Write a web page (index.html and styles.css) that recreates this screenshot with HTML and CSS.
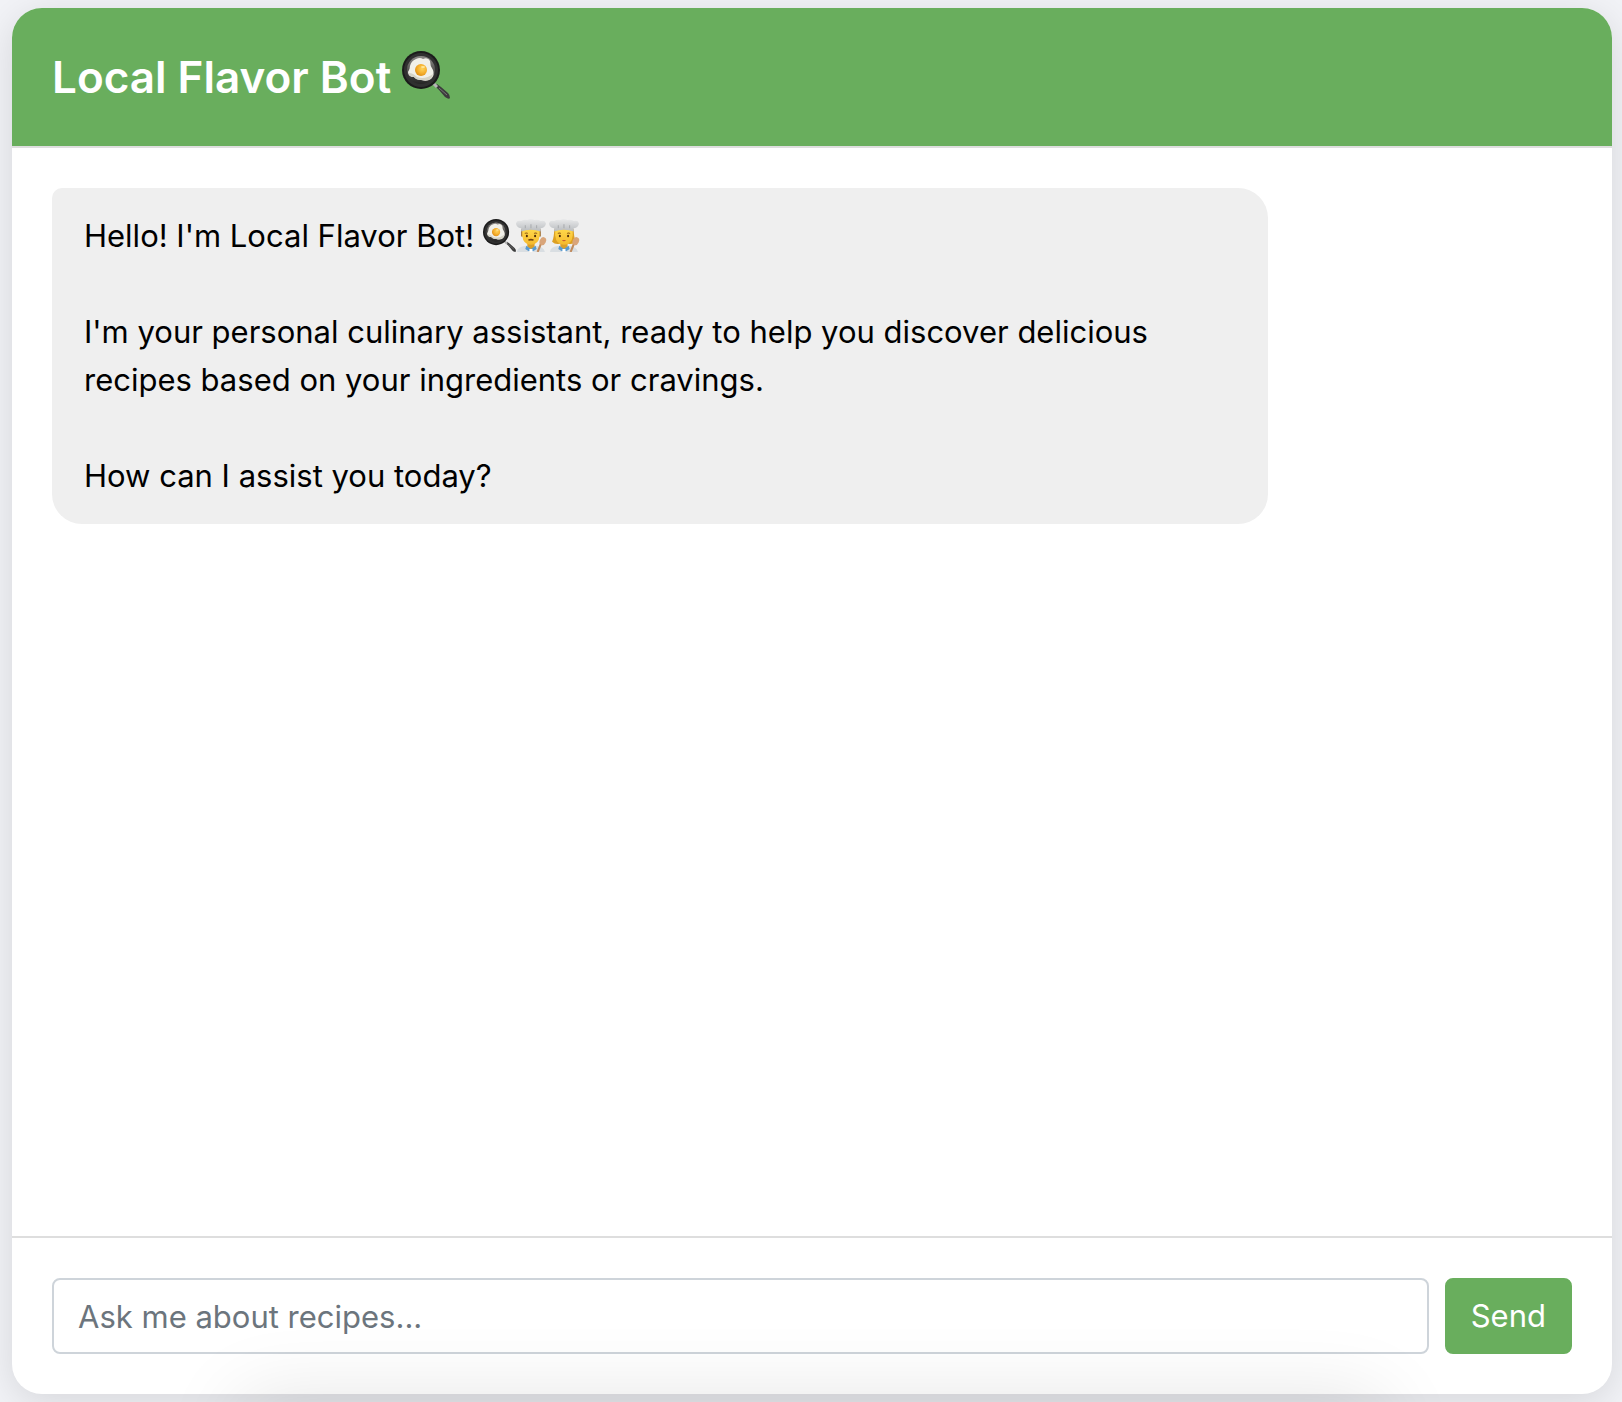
FILE: index.html
```html
<!DOCTYPE html>
<html lang="en">
<head>
<meta charset="utf-8">
<meta name="viewport" content="width=device-width, initial-scale=1">
<title>Local Flavor Bot</title>
<link rel="stylesheet" href="styles.css">
</head>
<body>
<svg class="sprite" aria-hidden="true">
  <defs>
    <radialGradient id="yolk" cx="0.6" cy="0.4" r="0.6"><stop offset="0" stop-color="#ffd45c"/><stop offset="0.6" stop-color="#f5b130"/><stop offset="1" stop-color="#e39418"/></radialGradient>
    <linearGradient id="pan-base" x1="0" y1="0" x2="0" y2="1"><stop offset="0" stop-color="#8d8a88"/><stop offset="0.5" stop-color="#575553"/><stop offset="1" stop-color="#242424"/></linearGradient>
    <linearGradient id="hat-fill" x1="0" y1="0" x2="0" y2="1"><stop offset="0" stop-color="#e9eaeb"/><stop offset="1" stop-color="#b9bcbf"/></linearGradient>
    <linearGradient id="skin" x1="0" y1="0" x2="0" y2="1"><stop offset="0" stop-color="#ffd84a"/><stop offset="1" stop-color="#f5b92e"/></linearGradient>
  </defs>
  <symbol id="pan" viewBox="0 0 48 48">
    <path d="M33 35L37 39L43 46Q47 49 48 47Q48 44 46 42L39 36L35 33Z" fill="#3c3c3c"/>
    <path d="M31 32L35 36" stroke="#b5b5b5" stroke-width="3"/>
    <path d="M37 37L45 44" stroke="#777" stroke-width="1"/>
    <circle cx="19" cy="19" r="19" fill="#1b1b1b"/>
    <circle cx="19" cy="19" r="17" fill="#303030"/>
    <circle cx="19" cy="19" r="14" fill="url(#pan-base)"/>
    <path d="M14 8Q18 6 21 8Q26 6 28 10Q28 15 31 19Q33 24 29 28Q25 31 19 29Q14 29 12 26Q6 26 6 21Q8 18 8 15Q9 10 14 8Z" fill="#f1f0e9"/>
    <path d="M7 22Q11 22 15 26Q23 29 31 23Q30 31 20 29Q14 29 12 26Q7 26 7 22Z" fill="#d4d3c6"/>
    <circle cx="19" cy="19" r="6" fill="url(#yolk)"/>
    <ellipse cx="21" cy="16" rx="2" ry="1" fill="#ffe69a"/>
  </symbol>
  <symbol id="chef-face" viewBox="0 0 32 32">
    <path d="M1 32Q1 27 10 26H19Q27 27 28 32Z" fill="#d9dee2"/>
    <path d="M11 22H18V27L14.500 30L11 27Z" fill="#dba02a"/>
    <path d="M10 26L14.500 29L19 26L20 29L17 31H12L9 29Z" fill="#5a9bd0"/>
    <path d="M13 29H16V32H13Z" fill="#fff"/>
    <path d="M6 10V16Q7 25 14.500 25Q22 25 23 16V10Z" fill="url(#skin)"/>
    <path d="M8.500 14Q10 13 11.500 14M17.500 14Q19 13 20.500 14" fill="none" stroke="#8a5411" stroke-width="1"/>
    <ellipse cx="10.500" cy="16.500" rx="1" ry="1.300" fill="#4d2b0b"/>
    <ellipse cx="18.500" cy="16.500" rx="1" ry="1.300" fill="#4d2b0b"/>
    <path d="M5 12L5 9Q0 8 0 4Q1 1 5 2Q8 0 11 1Q14 -1 18 1Q21 0 24 2Q28 1 29 4Q29 8 24 9V12Q14 9 5 12Z" fill="url(#hat-fill)"/>
    <path d="M9 6V9M14.500 5V9M20 6V9" stroke="#a8abae" stroke-width="1"/>
    <path d="M25 22L21 32" stroke="#c08a5c" stroke-width="2"/>
    <ellipse cx="26" cy="21.500" rx="3" ry="4" transform="rotate(25 26 21.500)" fill="#d9a57a"/>
  </symbol>
  <symbol id="chef-man" viewBox="0 0 32 32">
    <path d="M5 10H24V17H5Z" fill="#9a6420"/>
    <use href="#chef-face"/>
    <path d="M12 20.500Q14.500 19.500 17 20.500" fill="none" stroke="#74430f" stroke-width="1.500"/>
  </symbol>
  <symbol id="chef-woman" viewBox="0 0 32 32">
    <path d="M5 10H24Q24 18 26 22Q23 25 19 24H10Q6 25 3 22Q5 18 5 10Z" fill="#dca022"/>
    <use href="#chef-face"/>
    <path d="M12.500 20.500H16.500Q14.500 22.500 12.500 20.500Z" fill="#bd3f2c"/>
  </symbol>
</svg>

<main class="chat">
  <header class="chat-header">
    <h1 class="chat-title">Local Flavor Bot <svg class="emoji" role="img" aria-label="Cooking"><use href="#pan"/></svg></h1>
  </header>
  <section class="chat-log" aria-live="polite">
    <article class="message">
      <p>Hello! I'm Local Flavor Bot! <span class="emoji-run"><svg class="emoji" role="img" aria-label="Cooking"><use href="#pan"/></svg><svg class="emoji" role="img" aria-label="Man cook"><use href="#chef-man"/></svg><svg class="emoji" role="img" aria-label="Woman cook"><use href="#chef-woman"/></svg></span></p>
      <p>I'm your personal culinary assistant, ready to help you discover delicious recipes based on your ingredients or cravings.</p>
      <p>How can I assist you today?</p>
    </article>
  </section>
  <form class="composer">
    <input class="composer-input" type="text" placeholder="Ask me about recipes..." aria-label="Your message">
    <button class="composer-send" type="button">Send</button>
  </form>
</main>
<div class="bottom-shade"></div>
</body>
</html>
```
FILE: styles.css
```css
* {
  box-sizing: border-box;
}

body {
  margin: 0;
  min-height: 100vh;
  padding: 8px 10px 8px 12px;
  display: flex;
  background: #f2f3f7;
  color: #000;
  font-family: Inter, "Liberation Sans", sans-serif;
  font-size: 31px;
  line-height: 48px;
  overflow: hidden;
}

.sprite {
  position: absolute;
  width: 0;
  height: 0;
}

.chat {
  flex: 1;
  display: flex;
  flex-direction: column;
  overflow: hidden;
  border-radius: 30px;
  background: #fff;
  box-shadow: 0 8px 40px rgba(0, 0, 0, 0.12);
}

.chat-header {
  padding: 40px;
  border-bottom: 2px solid #dedede;
  background: #69ae5d;
  color: #fff;
}

.chat-title {
  margin: 0;
  font-size: 44px;
  font-weight: 600;
  line-height: 58px;
}

.chat-title .emoji {
  width: 48px;
  height: 48px;
  vertical-align: -6px;
}

.chat-log {
  flex: 1;
  padding: 40px;
}

.message {
  width: 80%;
  padding: 24px 32px;
  border-radius: 10px 30px 30px 30px;
  background: #efefef;
}

.message p {
  margin: 0;
}

.message p + p {
  margin-top: 48px;
}

.emoji-run {
  display: inline-flex;
  vertical-align: -5px;
}

.emoji-run .emoji {
  width: 33px;
  height: 33px;
}

.composer {
  display: flex;
  gap: 16px;
  padding: 40px;
  border-top: 2px solid #dedede;
}

.composer-input,
.composer-send {
  height: 76px;
  border-radius: 8px;
  font: inherit;
}

.composer-input {
  flex: 1;
  min-width: 0;
  padding: 12px 24px;
  border: 2px solid #ced4da;
  background: #fff;
  color: #212529;
}

.composer-input::placeholder {
  color: #6c757d;
  opacity: 1;
}

.composer-send {
  padding: 12px 24px;
  border: 2px solid #69ae5d;
  background: #69ae5d;
  color: #fff;
}

/* Soft shade rising from below the window's lower edge */
.bottom-shade {
  position: fixed;
  top: 100%;
  left: 16%;
  right: 16%;
  height: 60px;
  box-shadow: 0 16px 80px 20px rgba(0, 0, 0, 0.11);
  pointer-events: none;
}
```
